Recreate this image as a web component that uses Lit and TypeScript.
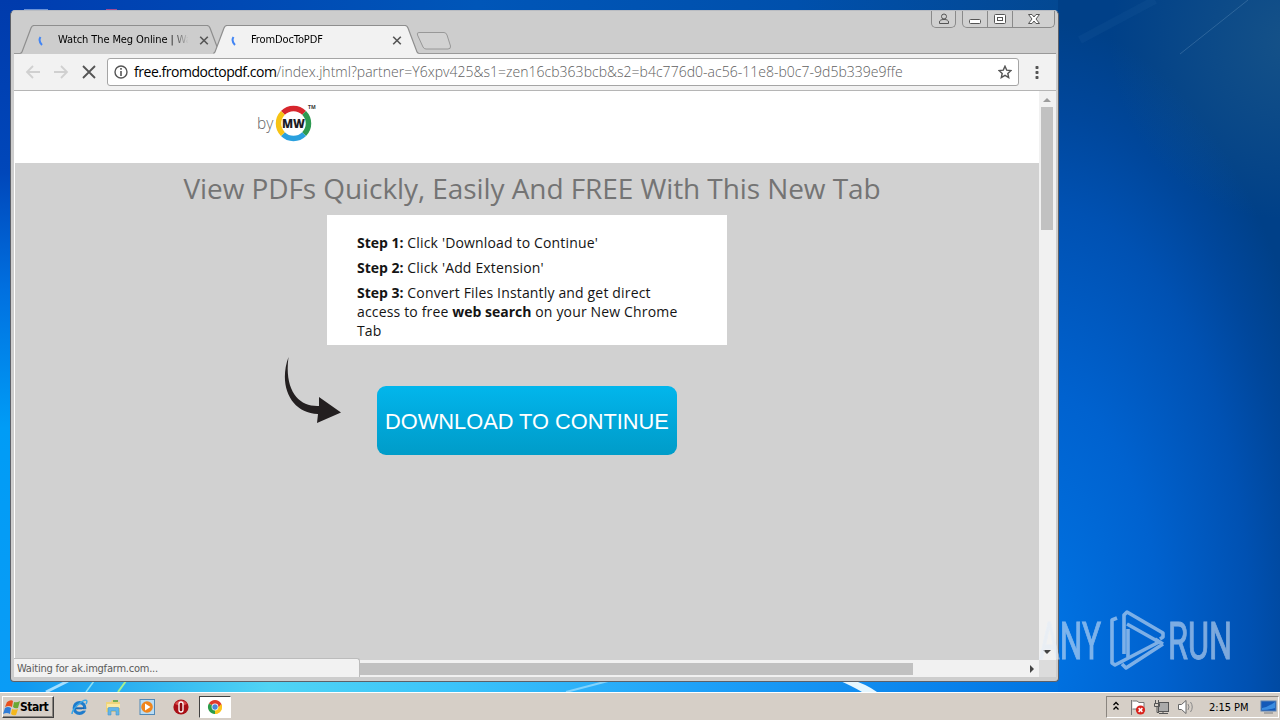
import { LitElement, css, html, svg } from 'lit';
import { customElement, property } from 'lit/decorators.js';

const steps = [
  { label: 'Step 1:', body: html`Click 'Download to Continue'` },
  { label: 'Step 2:', body: html`Click 'Add Extension'` },
  {
    label: 'Step 3:',
    body: html`Convert Files Instantly and get direct<br />access to free <b>web search</b> on your New Chrome<br />Tab`,
  },
];

const startIcon = svg`
  <path d="M4 3 Q8 0 10 2 L9 8 Q6 6 2 8Z" fill="#e8501e"/>
  <path d="M11 3 Q14 4 17 2 L15 9 Q12 10 10 8Z" fill="#6aa834"/>
  <path d="M2 9 Q5 7 8 9 L7 15 Q4 13 0 15Z" fill="#2f7cd6"/>
  <path d="M9 10 Q12 11 15 10 L13 16 Q10 17 8 15Z" fill="#f4b71c"/>`;

const quickLaunch = [
  svg`
    <circle cx="8.5" cy="9" r="5.3" fill="none" stroke="#1f7ccc" stroke-width="3.2"/>
    <path d="M4 9.3H13" stroke="#1664b0" stroke-width="2"/>
    <path d="M11 10.9H16" stroke="#d6cfc7" stroke-width="1.4"/>
    <path d="M1 15C1 10 12 0 15.5 1.5 16.5 2.2 15.5 4 15 5" fill="none" stroke="#39a7e8" stroke-width="1.5"/>`,
  svg`
    <path d="M1 3H6L7 1H13V3H15V13H1Z" fill="#efd47a"/>
    <path d="M2 5H15V9H2Z" fill="#fae9a4"/>
    <path d="M8 2H13" stroke="#4aa04a" stroke-width="1.5"/>
    <path d="M3 16V9.5Q3 8.5 4 8.5H13Q14 8.5 14 9.5V16H11V12H6V16Z" fill="#62b5e8" stroke="#4a96c8" stroke-width=".6"/>`,
  svg`
    <rect x="1" y=".5" width="14.5" height="15" fill="#b9dcf4" stroke="#5089b8"/>
    <circle cx="8" cy="8" r="5.8" fill="#f0851c"/>
    <path d="M6 4.5L11.5 8L6 11.5Z" fill="#fff"/>`,
  svg`
    <circle cx="8" cy="8" r="7.6" fill="#a90f16"/>
    <path d="M2 5A7 7 0 0 1 14 5Q8 8 2 5Z" fill="#d94b4b"/>
    <rect x="6" y="3" width="4" height="10" rx="2" fill="#8c0b10" stroke="#fff" stroke-width="1.3"/>`,
];

const chromeIcon = svg`
  <path d="M8 8L1.9 4.5A7 7 0 0 1 14.1 4.5L15 8Z" fill="#e0392b"/>
  <path d="M8 8H15A7 7 0 0 1 8 15Z" fill="#fbc51b"/>
  <path d="M14.3 5A7 7 0 0 1 7.5 15L11 8.5Z" fill="#fbc51b"/>
  <path d="M8 8L8 15A7 7 0 0 1 1.9 4.5Z" fill="#2b9c48"/>
  <circle cx="8" cy="8" r="3.4" fill="#fff"/>
  <circle cx="8" cy="8" r="2.7" fill="#4a86d8"/>`;

@customElement('desktop-wallpaper')
export class DesktopWallpaper extends LitElement {
  static styles = css`
    :host {
      display: block;
      position: absolute;
      inset: 0;
    }
    svg {
      display: block;
    }
  `;

  render() {
    return html`
      <svg width="1280" height="720" viewBox="0 0 1280 720">
        <defs>
          <linearGradient id="top" x1="0" x2="1">
            <stop offset="0" stop-color="#003cb0" />
            <stop offset=".45" stop-color="#0056b8" />
            <stop offset=".75" stop-color="#0050ac" />
            <stop offset="1" stop-color="#034892" />
          </linearGradient>
          <linearGradient id="left" x1="0" y1="0" x2="0" y2="1">
            <stop offset="0" stop-color="#003bac" />
            <stop offset=".25" stop-color="#0047ba" />
            <stop offset=".42" stop-color="#0070e0" />
            <stop offset=".62" stop-color="#009cf6" />
            <stop offset="1" stop-color="#0a9cf6" />
          </linearGradient>
          <linearGradient id="bottom" x1="0" x2="1">
            <stop offset="0" stop-color="#0c94f0" />
            <stop offset=".1" stop-color="#2cb0f0" />
            <stop offset=".21" stop-color="#50d4f4" />
            <stop offset=".35" stop-color="#3cc4fa" />
            <stop offset=".55" stop-color="#1ea0f8" />
            <stop offset=".75" stop-color="#0880ea" />
            <stop offset=".83" stop-color="#0072e0" />
            <stop offset="1" stop-color="#004cac" />
          </linearGradient>
          <radialGradient
            id="sky"
            gradientUnits="userSpaceOnUse"
            cx="0"
            cy="0"
            r="1"
            gradientTransform="translate(1040 640) scale(300 620)"
          >
            <stop offset="0" stop-color="#0074e4" />
            <stop offset=".4" stop-color="#0062cf" />
            <stop offset=".7" stop-color="#0051b2" />
            <stop offset=".85" stop-color="#00479c" />
            <stop offset="1" stop-color="#004088" />
          </radialGradient>
          <radialGradient id="glow" gradientUnits="userSpaceOnUse" cx="1290" cy="40" r="180">
            <stop offset="0" stop-color="#2a6388" stop-opacity=".5" />
            <stop offset="1" stop-color="#2a6388" stop-opacity="0" />
          </radialGradient>
        </defs>
        <rect width="1280" height="720" fill="url(#bottom)" />
        <rect width="1060" height="40" fill="url(#top)" />
        <rect width="20" height="690" fill="url(#left)" />
        <rect x="1058" width="222" height="692" fill="url(#sky)" />
        <rect x="1058" width="222" height="260" fill="url(#glow)" />
        <path d="M1180 54L1248 0" stroke="#5f8fba" stroke-opacity=".4" />
        <path d="M1080 40L1155 0" stroke="#4a86bd" stroke-opacity=".08" stroke-width="8" />
        <path d="M46 692L68 681" stroke="#a5dfff" stroke-width="3" />
        <path d="M86 692L94 681" stroke="#8fe0f4" stroke-width="1.5" />
        <path d="M118 692L126 681" stroke="#a8f090" stroke-width="2" />
        <path d="M566 692L608 681" stroke="#82d3fc" stroke-width="2" />
        <path d="M838 680L852 680Q866 684 877 692H862Q852 686 838 680Z" fill="#e4f6ff" />
        <path d="M24 9.5H48" stroke="#6c93d8" stroke-width="1" />
        <path d="M106 9.5H117" stroke="#a04c94" stroke-width="1" />
      </svg>
    `;
  }
}

@customElement('browser-tab')
export class BrowserTab extends LitElement {
  @property() label = '';
  @property({ type: Number }) width = 200;
  @property({ type: Boolean }) active = false;

  static styles = css`
    :host {
      display: flex;
      position: relative;
      align-items: center;
      box-sizing: border-box;
      height: 29px;
      padding: 0 12px 0 18px;
      margin-right: -8px;
    }
    :host([active]) {
      z-index: 1;
      padding-right: 17px;
      margin-right: 0;
    }
    .shape {
      position: absolute;
      inset: 0;
    }
    .spinner {
      position: relative;
      flex: none;
      width: 10px;
      height: 14px;
    }
    .label {
      position: relative;
      flex: 1;
      margin: 0 8px 1px 10px;
      overflow: hidden;
      white-space: nowrap;
      font: 11px 'DejaVu Sans Condensed', 'DejaVu Sans', sans-serif;
      letter-spacing: -0.1px;
      color: #000;
      -webkit-mask-image: linear-gradient(90deg, #000 84%, transparent 98%);
      mask-image: linear-gradient(90deg, #000 84%, transparent 98%);
    }
    .close {
      position: relative;
      flex: none;
      width: 10px;
      height: 10px;
    }
  `;

  render() {
    const w = this.width;
    const fill = this.active ? '#f2f2f2' : '#cdcdcd';
    const edge = `M0.5 28.5L2 27L11 3Q12 .5 14 .5H${w - 14}Q${w - 12} .5 ${w - 11} 3L${w - 2} 27L${w - 0.5} 28.5`;
    return html`
      <svg class="shape" width=${w} height="29">
        <path d="${edge}V29H.5Z" fill=${fill} />
        <path d=${edge} fill="none" stroke="#8e8e8e" stroke-width="1.2" />
      </svg>
      <svg class="spinner" viewBox="0 0 10 14">
        <path d="M2.5 4Q0 8 4 12" fill="none" stroke="#4285f4" stroke-width="2" />
      </svg>
      <span class="label">${this.label}</span>
      <svg class="close" viewBox="0 0 10 10">
        <path d="M1.2 1.7L8.8 9.3M8.8 1.7L1.2 9.3" stroke="#555" stroke-width="1.6" />
      </svg>
    `;
  }
}

@customElement('pdf-page')
export class PdfPage extends LitElement {
  static styles = css`
    :host {
      display: block;
      overflow: hidden;
      background: #d1d1d1;
      font-family: 'Open Sans', sans-serif;
    }
    header {
      height: 72px;
      background: #fff;
      padding-left: 240px;
    }
    .logo {
      display: block;
    }
    h1 {
      margin: 5px 0 0 10px;
      height: 47px;
      font-size: 28px;
      font-weight: 400;
      line-height: 40px;
      letter-spacing: -0.08px;
      color: #747474;
      text-align: center;
      white-space: nowrap;
    }
    .steps {
      box-sizing: border-box;
      width: 400px;
      height: 130px;
      margin: 0 auto;
      padding: 18px 30px 0;
      background: #fff;
      color: #141414;
      font-size: 14px;
      line-height: 19px;
      letter-spacing: 0.16px;
      white-space: nowrap;
    }
    .steps p {
      margin: 0 0 6px;
    }
    .steps b {
      letter-spacing: 0;
    }
    .action {
      display: flex;
      padding-left: 268px;
    }
    .arrow {
      margin-top: 12px;
    }
    button {
      width: 300px;
      height: 69px;
      margin: 41px 0 0 34px;
      padding: 2px 0 0;
      border: 0;
      border-radius: 9px;
      background: linear-gradient(#02b6ec, #01a9dc 45%, #009cc8);
      color: #fff;
      font: 21.8px/67px 'Liberation Sans', Arial, sans-serif;
      white-space: nowrap;
    }
  `;

  render() {
    return html`
      <header>
        <svg class="logo" width="64" height="60" viewBox="0 0 64 60">
          <text x="2" y="38" font-family="Open Sans" font-size="15.5" font-weight="300" fill="#666">by</text>
          <g fill="none" stroke-width="5.5">
            <path d="M27.9 21.9A15 15 0 0 1 49.1 21.9" stroke="#d7262d" />
            <path d="M49.1 21.9A15 15 0 0 1 49.1 43.1" stroke="#2d9a51" />
            <path d="M49.1 43.1A15 15 0 0 1 27.9 43.1" stroke="#2aa0de" />
            <path d="M27.9 43.1A15 15 0 0 1 27.9 21.9" stroke="#f7c313" />
          </g>
          <text x="38.5" y="36.5" text-anchor="middle" font-family="Open Sans" font-size="12" font-weight="800" textLength="23" lengthAdjust="spacingAndGlyphs" fill="#1c1c24">MW</text>
          <text x="53" y="18" font-family="Open Sans" font-size="5" font-weight="700" fill="#333">TM</text>
        </svg>
      </header>
      <h1>View PDFs Quickly, Easily And FREE With This New Tab</h1>
      <div class="steps">
        ${steps.map((step) => html`<p><b>${step.label}</b> ${step.body}</p>`)}
      </div>
      <div class="action">
        <svg class="arrow" width="60" height="68" viewBox="0 0 60 68">
          <path d="M5.5 0C-5 29 8 56 35 57L34 66L58 55.5L36 40V49C16 50 1 34 5.5 0Z" fill="#231f20" />
        </svg>
        <button>DOWNLOAD TO CONTINUE</button>
      </div>
    `;
  }
}

@customElement('browser-window')
export class BrowserWindow extends LitElement {
  static styles = css`
    :host {
      display: flex;
      flex-direction: column;
      box-sizing: border-box;
      width: 1049px;
      height: 672px;
      padding: 0 2px 4px 3px;
      border: 1px solid #5d6068;
      border-top-color: #b9bcc2;
      border-radius: 5px 5px 4px 4px;
      background: #cdcdcd;
    }
    .titlebar {
      display: flex;
      height: 42px;
      border-bottom: 1px solid #999;
    }
    .tabs {
      display: flex;
      flex: 1;
      align-items: flex-end;
      padding-left: 6px;
    }
    .tabs browser-tab {
      margin-bottom: -1px;
    }
    .watch {
      width: 201px;
    }
    .pdf {
      width: 206px;
    }
    .new-tab {
      margin: 0 0 3px -3px;
    }
    .controls {
      display: flex;
      gap: 6px;
      height: 17px;
      padding-right: 1px;
    }
    .group {
      display: flex;
      box-sizing: border-box;
      border: 1px solid #8a8a8a;
      border-top: 0;
      border-radius: 0 0 5px 5px;
      background: #d0d0d0;
    }
    .group svg + svg {
      border-left: 1px solid #8a8a8a;
    }
    .toolbar {
      display: flex;
      align-items: center;
      height: 36px;
      border-bottom: 1px solid #b5b5b5;
      background: #f2f2f2;
    }
    .nav {
      display: flex;
      gap: 12px;
      padding: 0 10px 0 11px;
    }
    .omnibox {
      display: flex;
      align-items: center;
      box-sizing: border-box;
      width: 912px;
      height: 28px;
      padding: 0 6px;
      border: 1px solid #a5a5a5;
      border-radius: 3px;
      background: #fff;
    }
    .url {
      flex: 1;
      margin: 0 0 1px 6px;
      font: 300 14px 'Open Sans', sans-serif;
      letter-spacing: 0.02px;
      color: #606060;
      white-space: nowrap;
    }
    .url span {
      font-weight: 400;
      letter-spacing: -0.47px;
      color: #000;
    }
    .menu {
      margin-left: 10px;
    }
    .viewport {
      display: grid;
      grid-template: 569px 17px / 1024px 17px;
      flex: 1;
      position: relative;
      border-left: 1px solid #fff;
      background: #f1f1f1;
    }
    .vbar {
      display: flex;
      flex-direction: column;
      align-items: center;
      justify-content: space-between;
      margin-right: 1px;
    }
    .vbar .thumb {
      width: 12px;
      height: 123px;
      margin-bottom: auto;
      background: #c1c1c1;
    }
    .hbar {
      display: flex;
      align-items: center;
      justify-content: space-between;
    }
    .hbar .thumb {
      width: 554px;
      height: 12px;
      margin-left: 344px;
      background: #c1c1c1;
    }
    .corner {
      background: #dcdcdc;
    }
    .status {
      position: absolute;
      left: -1px;
      bottom: 0;
      box-sizing: border-box;
      width: 346px;
      height: 19px;
      padding-left: 3px;
      border: 1px solid #bcbcbc;
      border-width: 1px 1px 0 0;
      border-radius: 0 3px 0 0;
      background: #f2f2f2;
      color: #5a5a5a;
      font: 11px/19px 'DejaVu Sans Condensed', 'DejaVu Sans', sans-serif;
      letter-spacing: -0.22px;
    }
  `;

  render() {
    return html`
      <div class="titlebar">
        <div class="tabs">
          <browser-tab class="watch" label="Watch The Meg Online | Wa" .width=${201}></browser-tab>
          <browser-tab class="pdf" label="FromDocToPDF" .width=${206} active></browser-tab>
          <svg class="new-tab" width="36" height="18" viewBox="0 0 36 18">
            <path d="M3 .5H28Q30 .5 31 3L34.5 14Q35 17 32 17H10Q8 17 7 15L1.5 3Q.5 .5 3 .5Z" fill="#d2d2d2" stroke="#989898" />
          </svg>
        </div>
        <div class="controls">
          <div class="group">
            <svg width="23" height="16" fill="none" stroke="#555">
              <circle cx="12" cy="5.5" r="2.5" />
              <path d="M7.5 12.5V11Q7.5 8.5 12 8.5T16.5 11V12.5Z" />
            </svg>
          </div>
          <div class="group">
            <svg width="24" height="16">
              <rect x="6.5" y="8.5" width="11" height="4" rx="1" fill="#fff" stroke="#555" />
            </svg>
            <svg width="24" height="16" fill="#fff" stroke="#555">
              <rect x="6.5" y="3.5" width="11" height="9" rx="1" />
              <rect x="9.5" y="6.5" width="5" height="3" />
            </svg>
            <svg width="41" height="16">
              <path d="M15.5 3.5H19L21 6L23 3.5H26.5L23 8L26.5 12.5H23L21 10L19 12.5H15.5L19 8Z" fill="#fff" stroke="#555" />
            </svg>
          </div>
        </div>
      </div>
      <div class="toolbar">
        <div class="nav">
          <svg width="16" height="16" fill="none" stroke="#d0d0d0" stroke-width="1.8">
            <path d="M15 8H2M8 2L2 8L8 14" />
          </svg>
          <svg width="16" height="16" fill="none" stroke="#d0d0d0" stroke-width="1.8">
            <path d="M1 8H14M8 2L14 8L8 14" />
          </svg>
          <svg width="16" height="16" stroke="#555" stroke-width="1.8">
            <path d="M2 2L14 14M14 2L2 14" />
          </svg>
        </div>
        <div class="omnibox">
          <svg width="14" height="14">
            <circle cx="7" cy="7" r="6" fill="none" stroke="#555" stroke-width="1.4" />
            <path d="M7 3V4.7M7 6V11" stroke="#555" stroke-width="1.6" />
          </svg>
          <div class="url"><span>free.fromdoctopdf.com</span>/index.jhtml?partner=Y6xpv425&amp;s1=zen16cb363bcb&amp;s2=b4c776d0-ac56-11e8-b0c7-9d5b339e9ffe</div>
          <svg width="14" height="14" viewBox="0 0 14 14">
            <path d="M7 1.2L8.7 5.1L13 5.5L9.8 8.4L10.7 12.6L7 10.4L3.3 12.6L4.2 8.4L1 5.5L5.3 5.1Z" fill="none" stroke="#555" stroke-width="1.4" />
          </svg>
        </div>
        <svg class="menu" width="16" height="16" fill="#555">
          <rect x="6.5" y="2" width="3" height="3" rx=".7" />
          <rect x="6.5" y="7" width="3" height="3" rx=".7" />
          <rect x="6.5" y="12" width="3" height="3" rx=".7" />
        </svg>
      </div>
      <div class="viewport">
        <pdf-page></pdf-page>
        <div class="vbar">
          <svg width="14" height="16"><path d="M3 11L7 7L11 11Z" fill="#9c9c9c" /></svg>
          <div class="thumb"></div>
          <svg width="14" height="16"><path d="M3 6L7 10L11 6Z" fill="#444" /></svg>
        </div>
        <div class="hbar">
          <div class="thumb"></div>
          <svg width="14" height="14"><path d="M5 3L9 7L5 11Z" fill="#444" /></svg>
        </div>
        <div class="corner"></div>
        <div class="status">Waiting for ak.imgfarm.com...</div>
      </div>
    `;
  }
}

@customElement('task-bar')
export class TaskBar extends LitElement {
  static styles = css`
    :host {
      display: flex;
      align-items: center;
      box-sizing: border-box;
      height: 28px;
      padding: 1px 1px 0 2px;
      border-top: 1px solid #fff;
      background: #d6cfc7;
      font: 11px 'DejaVu Sans Condensed', 'DejaVu Sans', sans-serif;
    }
    svg {
      flex: none;
    }
    .start {
      display: flex;
      align-items: center;
      box-sizing: border-box;
      width: 52px;
      height: 22px;
      padding-left: 0;
      border: 1px solid;
      border-color: #fff #404040 #404040 #fff;
      box-shadow: inset -1px -1px #8a857f;
      font-size: 12px;
      font-weight: 700;
      letter-spacing: -0.5px;
    }
    .quick {
      display: flex;
      gap: 17px;
      margin-left: 17px;
    }
    .task {
      display: flex;
      align-items: center;
      justify-content: center;
      box-sizing: border-box;
      width: 32px;
      height: 22px;
      margin-left: 9px;
      border: 1px solid;
      border-color: #404040 #fff #fff #404040;
      background: #fff;
    }
    .tray {
      display: flex;
      align-items: center;
      box-sizing: border-box;
      width: 173px;
      height: 22px;
      margin-left: auto;
      padding-left: 5px;
      border: 1px solid;
      border-color: #8a857f #fff #fff #8a857f;
    }
    .clock {
      margin-left: 3px;
      letter-spacing: -0.05px;
      white-space: nowrap;
    }
    .peek {
      margin: 0 1px 0 auto;
    }
  `;

  render() {
    return html`
      <div class="start"><svg width="17" height="17">${startIcon}</svg>Start</div>
      <div class="quick">
        ${quickLaunch.map((icon) => html`<svg width="17" height="17">${icon}</svg>`)}
      </div>
      <div class="task"><svg width="16" height="16">${chromeIcon}</svg></div>
      <div class="tray">
        <svg width="8" height="12" fill="none" stroke="#000" stroke-width="1.3">
          <path d="M1.5 4L4 1.5L6.5 4M1.5 8.5L4 6L6.5 8.5" />
        </svg>
        <svg width="86" height="18">
          <path d="M11.5 2V17M12.5 3H17L19 4.5H24V11H12.5" fill="#fff" stroke="#777" />
          <circle cx="20.5" cy="12" r="4.6" fill="#d9221c" />
          <path d="M18.6 10.1L22.4 13.9M22.4 10.1L18.6 13.9" stroke="#fff" stroke-width="1.5" />
          <rect x="38.5" y="4.5" width="10" height="9" fill="#aaa" stroke="#555" />
          <path d="M39 15.5H48M43 13V15M35.5 2V5M38.5 2V5M34.5 5.5H39.5V8.5H34.5ZM37 9V14.5H39" fill="none" stroke="#555" />
          <path d="M58.5 6.5H61.5L66 2.5V15.5L61.5 11.5H58.5Z" fill="#fff" stroke="#666" />
          <path d="M68 6Q70 9 68 12M70.5 4Q74 9 70.5 14" fill="none" stroke="#888" />
        </svg>
        <span class="clock">2:15 PM</span>
        <svg class="peek" width="17" height="15">
          <rect x="1" y="1" width="15" height="10" fill="#1459b8" stroke="#5c82b0" />
          <path d="M2 8Q8 7 15 2V8Q8 10 2 10Z" fill="#3b8ce0" />
          <path d="M4 13H13" stroke="#999" stroke-width="1.5" />
        </svg>
      </div>
    `;
  }
}

@customElement('app-root')
export class AppRoot extends LitElement {
  static styles = css`
    :host {
      display: flex;
      flex-direction: column;
      justify-content: flex-end;
      position: relative;
      width: 1280px;
      height: 720px;
      overflow: hidden;
    }
    browser-window {
      position: absolute;
      left: 10px;
      top: 10px;
    }
    task-bar {
      position: relative;
    }
    .watermark {
      position: absolute;
      left: 1036px;
      top: 606px;
      opacity: 0.55;
    }
  `;

  render() {
    return html`
      <desktop-wallpaper></desktop-wallpaper>
      <browser-window></browser-window>
      <task-bar></task-bar>
      <svg class="watermark" width="230" height="70" viewBox="0 0 230 70">
        <g fill="#e4edf8" stroke="#e4edf8" stroke-width="1" font-family="Roboto, sans-serif" font-size="51">
          <text x="3" y="53" textLength="62" lengthAdjust="spacingAndGlyphs">ANY</text>
          <text x="132" y="53" textLength="64" lengthAdjust="spacingAndGlyphs">RUN</text>
        </g>
        <g fill="none" stroke="#e4edf8" stroke-width="3.6" stroke-linejoin="round">
          <path d="M81 12L76 14V57L79 59L123 36L91 18" />
          <path d="M88 48V9L91 6L127 27V31L124 33" />
          <path d="M92 51V23M127 38L90 62L86 58M127 38L119 33" />
        </g>
      </svg>
    `;
  }
}

declare global {
  interface HTMLElementTagNameMap {
    'app-root': AppRoot;
    'browser-window': BrowserWindow;
    'browser-tab': BrowserTab;
    'desktop-wallpaper': DesktopWallpaper;
    'pdf-page': PdfPage;
    'task-bar': TaskBar;
  }
}
